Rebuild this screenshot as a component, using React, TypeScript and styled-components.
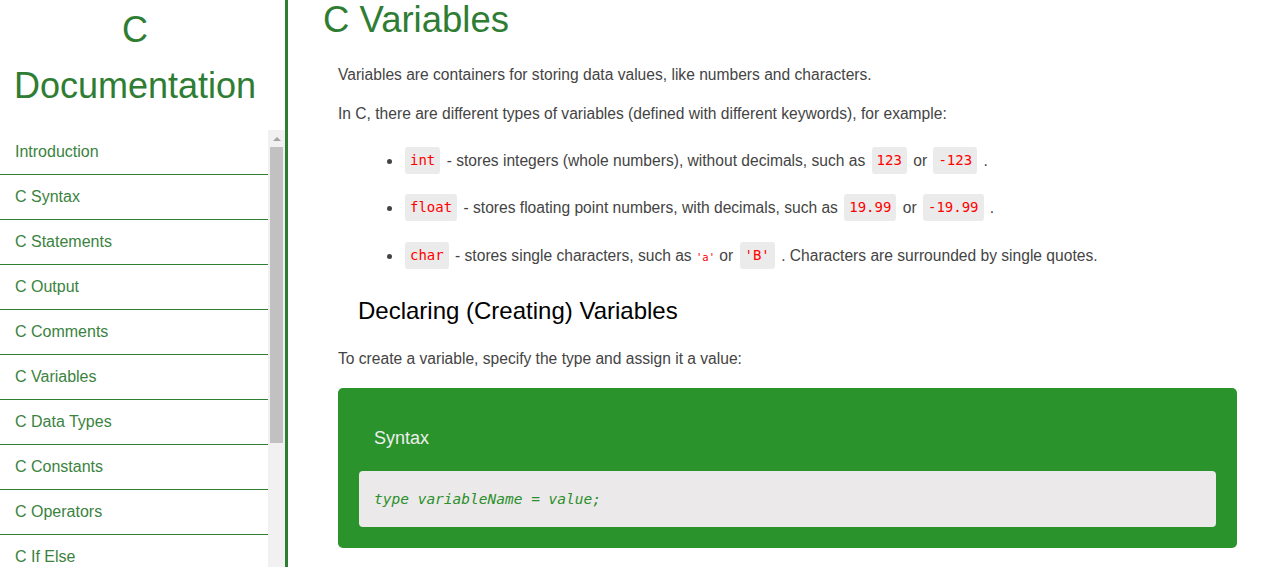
import React from "react";
import styled, { createGlobalStyle } from "styled-components";

const Global = createGlobalStyle`
  html, body { margin: 0; padding: 0; height: 100%; overflow: hidden; background: #fff; }
  body { font-family: "Liberation Sans", Arial, sans-serif; }
  * { box-sizing: border-box; }
`;

const Page = styled.div`
  display: flex;
  height: 100vh;
  width: 100vw;
`;

const Sidebar = styled.aside`
  width: 288px;
  flex: 0 0 288px;
  border-right: 3px solid #2e7d32;
  display: flex;
  flex-direction: column;
  height: 100%;
`;

const SideTitle = styled.h1`
  margin: 2px 0 16px;
  padding-right: 15px;
  font-size: 36px;
  font-weight: normal;
  line-height: 56px;
  text-align: center;
  color: #2e7d32;
`;

const NavArea = styled.div`
  flex: 1;
  display: flex;
  min-height: 0;
`;

const NavList = styled.ul`
  flex: 1;
  list-style: none;
  margin: 0;
  padding: 0;
  overflow: hidden;
`;

const NavItem = styled.li`
  height: 45px;
  line-height: 44px;
  padding-left: 15px;
  border-bottom: 1px solid #2e7d32;
  font-size: 16px;
  color: #3a833e;
`;

const ScrollTrack = styled.div`
  width: 17px;
  flex: 0 0 17px;
  background: #f1f1f1;
  display: flex;
  flex-direction: column;
  align-items: center;
`;

const ScrollArrow = styled.div`
  height: 17px;
  width: 17px;
  display: flex;
  align-items: center;
  justify-content: center;
  &::before {
    content: "";
    border-left: 4px solid transparent;
    border-right: 4px solid transparent;
    border-bottom: 4px solid #a3a3a3;
  }
`;

const ScrollThumb = styled.div`
  width: 13px;
  height: 296px;
  background: #c1c1c1;
`;

const Main = styled.main`
  flex: 1;
  min-width: 0;
  padding: 0 24px 0 35px;
  overflow: hidden;
`;

const Title = styled.h1`
  margin: 0 0 23px;
  font-size: 36.5px;
  font-weight: normal;
  line-height: 40px;
  color: #2e7d32;
`;

const Content = styled.div`
  padding-left: 15px;
  color: #444;
  font-size: 15.6px;
`;

const Para = styled.p`
  margin: 0 0 15px;
  line-height: 24px;
`;

const Bullets = styled.ul`
  margin: 20.5px 0 0;
  padding-left: 65px;
  list-style: disc;
`;

const Bullet = styled.li`
  height: 27px;
  line-height: 27px;
  margin-bottom: 20.5px;
  &:last-child { margin-bottom: 0; }
`;

const Chip = styled.code`
  display: inline-block;
  font-family: "DejaVu Sans Mono", "Liberation Mono", monospace;
  font-size: 14px;
  line-height: 17px;
  padding: 5px 5px;
  margin: 0 2px;
  background: #ecebeb;
  border-radius: 3px;
  color: #f00;
  vertical-align: top;
`;

const Tiny = styled.code`
  font-family: "DejaVu Sans Mono", "Liberation Mono", monospace;
  font-size: 10.5px;
  color: #f00;
`;

const SubTitle = styled.h2`
  margin: 27.5px 0 21px 20px;
  font-size: 24px;
  font-weight: normal;
  line-height: 30px;
  color: #000;
`;

const SyntaxBox = styled.div`
  margin-top: 17px;
  background: #2b932c;
  border-radius: 5px;
  padding: 38px 21px 21px;
`;

const SyntaxLabel = styled.div`
  padding-left: 15px;
  font-size: 18px;
  line-height: 24px;
  color: #eee;
  margin-bottom: 21px;
`;

const CodeBox = styled.pre`
  margin: 0;
  background: #ebe9e9;
  border-radius: 4px;
  height: 56px;
  padding: 0 15px;
  display: flex;
  align-items: center;
  font-family: "DejaVu Sans Mono", "Liberation Mono", monospace;
  font-style: italic;
  font-size: 14.5px;
  color: #2b8f2c;
`;

const navItems = [
  "Introduction",
  "C Syntax",
  "C Statements",
  "C Output",
  "C Comments",
  "C Variables",
  "C Data Types",
  "C Constants",
  "C Operators",
  "C If Else",
  "C Switch",
  "C While Loop",
];

export default function App() {
  return (
    <>
      <Global />
      <Page>
        <Sidebar>
          <SideTitle>
            C
            <br />
            Documentation
          </SideTitle>
          <NavArea>
            <NavList>
              {navItems.map((n) => (
                <NavItem key={n}>{n}</NavItem>
              ))}
            </NavList>
            <ScrollTrack>
              <ScrollArrow />
              <ScrollThumb />
            </ScrollTrack>
          </NavArea>
        </Sidebar>
        <Main>
          <Title>C Variables</Title>
          <Content>
            <Para>Variables are containers for storing data values, like numbers and characters.</Para>
            <Para>In C, there are different types of variables (defined with different keywords), for example:</Para>
            <Bullets>
              <Bullet>
                <Chip>int</Chip> - stores integers (whole numbers), without decimals, such as <Chip>123</Chip> or{" "}
                <Chip>-123</Chip> .
              </Bullet>
              <Bullet>
                <Chip>float</Chip> - stores floating point numbers, with decimals, such as <Chip>19.99</Chip> or{" "}
                <Chip>-19.99</Chip> .
              </Bullet>
              <Bullet>
                <Chip>char</Chip> - stores single characters, such as <Tiny>'a'</Tiny> or <Chip>'B'</Chip> .
                Characters are surrounded by single quotes.
              </Bullet>
            </Bullets>
            <SubTitle>Declaring (Creating) Variables</SubTitle>
            <Para>To create a variable, specify the type and assign it a value:</Para>
            <SyntaxBox>
              <SyntaxLabel>Syntax</SyntaxLabel>
              <CodeBox>type variableName = value;</CodeBox>
            </SyntaxBox>
          </Content>
        </Main>
      </Page>
    </>
  );
}
